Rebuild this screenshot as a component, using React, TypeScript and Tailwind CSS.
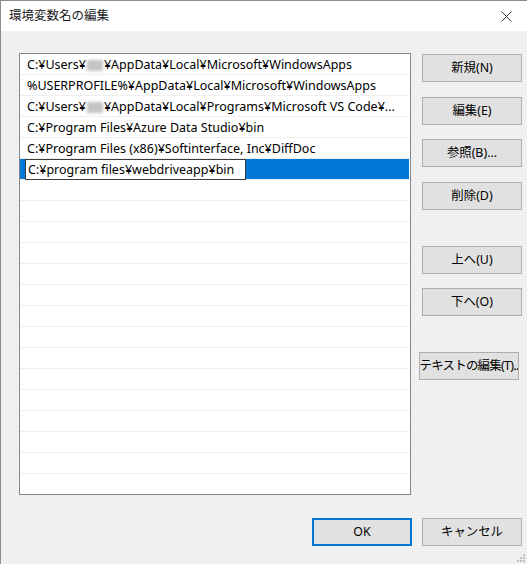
import React from "react";

const font = {
  fontFamily: '"Noto Sans", "Noto Sans CJK JP", sans-serif',
};

const Blur = () => (
  <span className="inline-block align-middle w-[16px] h-[11px] mx-[1px] bg-[#c4c4c4] blur-[1.5px]" />
);

const rows: React.ReactNode[] = [
  <>
    C:¥Users¥
    <Blur />
    ¥AppData¥Local¥Microsoft¥WindowsApps
  </>,
  <>%USERPROFILE%¥AppData¥Local¥Microsoft¥WindowsApps</>,
  <>
    C:¥Users¥
    <Blur />
    ¥AppData¥Local¥Programs¥Microsoft VS Code¥...
  </>,
  <>C:¥Program Files¥Azure Data Studio¥bin</>,
  <>C:¥Program Files (x86)¥Softinterface, Inc¥DiffDoc</>,
];

const WinButton = ({
  label,
  className = "",
}: {
  label: string;
  className?: string;
}) => (
  <button
    className={`w-[100px] h-[28px] bg-[#e1e1e1] border border-[#adadad] text-[12.4px] text-black flex items-center justify-center whitespace-nowrap overflow-hidden ${className}`}
  >
    {label}
  </button>
);

export default function App() {
  const empty = Array.from({ length: 15 });

  return (
    <div
      className="w-[527px] h-[564px] flex flex-col border-l border-t border-[#8c8c8c] overflow-hidden"
      style={font}
    >
      {/* title bar */}
      <div className="h-[30px] bg-white flex items-center justify-between pl-[8px] pr-[15px] pt-[1px] shrink-0">
        <span className="text-[12.5px] text-[#1a1a1a]">環境変数名の編集</span>
        <svg width="11" height="11" viewBox="0 0 11 11">
          <path d="M0.5 0.5 L10.5 10.5 M10.5 0.5 L0.5 10.5" stroke="#222" strokeWidth="0.9" />
        </svg>
      </div>

      <div className="flex-1 bg-[#f0f0f0] flex flex-col relative">
        <div className="flex pt-[22px] pl-[18px]">
          {/* list */}
          <div className="w-[392px] h-[442px] bg-white border border-[#828790] pr-[1px] overflow-hidden">
            {rows.map((r, i) => (
              <div
                key={i}
                className="h-[21px] border-b border-[#efefef] pl-[7px] pt-[2px] flex items-center text-[12.5px] text-black whitespace-nowrap overflow-hidden"
              >
                {r}
              </div>
            ))}
            <div className="h-[21px] bg-[#0078d7] border-b border-[#efefef] pl-[5px] flex items-center">
              <div className="w-[221px] h-[21px] bg-white border border-[#3c3c3c] pl-[2px] pt-[2px] flex items-center text-[12.5px] text-black whitespace-nowrap">
                C:¥program files¥webdriveapp¥bin
              </div>
            </div>
            {empty.map((_, i) => (
              <div key={i} className="h-[21px] border-b border-[#efefef]" />
            ))}
          </div>

          {/* buttons */}
          <div className="flex flex-col ml-[11px] pt-[1px]">
            <WinButton label="新規(N)" />
            <WinButton label="編集(E)" className="mt-[15px]" />
            <WinButton label="参照(B)..." className="mt-[14px]" />
            <WinButton label="削除(D)" className="mt-[15px]" />
            <WinButton label="上へ(U)" className="mt-[36px]" />
            <WinButton label="下へ(O)" className="mt-[14px]" />
            <WinButton
              label="テキストの編集(T).."
              className="mt-[36px] -ml-[3px] tracking-[-0.7px]"
            />
          </div>
        </div>

        <div className="flex justify-end gap-[10px] pr-[5px] mt-[23px]">
          <button className="w-[100px] h-[28px] bg-[#e1e1e1] border-2 border-[#0078d7] text-[12.4px] text-black">
            OK
          </button>
          <WinButton label="キャンセル" />
        </div>

        {/* size grip */}
        <svg className="absolute right-[2px] bottom-[2px]" width="9" height="9" viewBox="0 0 9 9">
          <g fill="#bdbdbd">
            <rect x="7" y="1" width="2" height="2" />
            <rect x="4" y="4" width="2" height="2" />
            <rect x="7" y="4" width="2" height="2" />
            <rect x="1" y="7" width="2" height="2" />
            <rect x="4" y="7" width="2" height="2" />
            <rect x="7" y="7" width="2" height="2" />
          </g>
        </svg>
      </div>
    </div>
  );
}
